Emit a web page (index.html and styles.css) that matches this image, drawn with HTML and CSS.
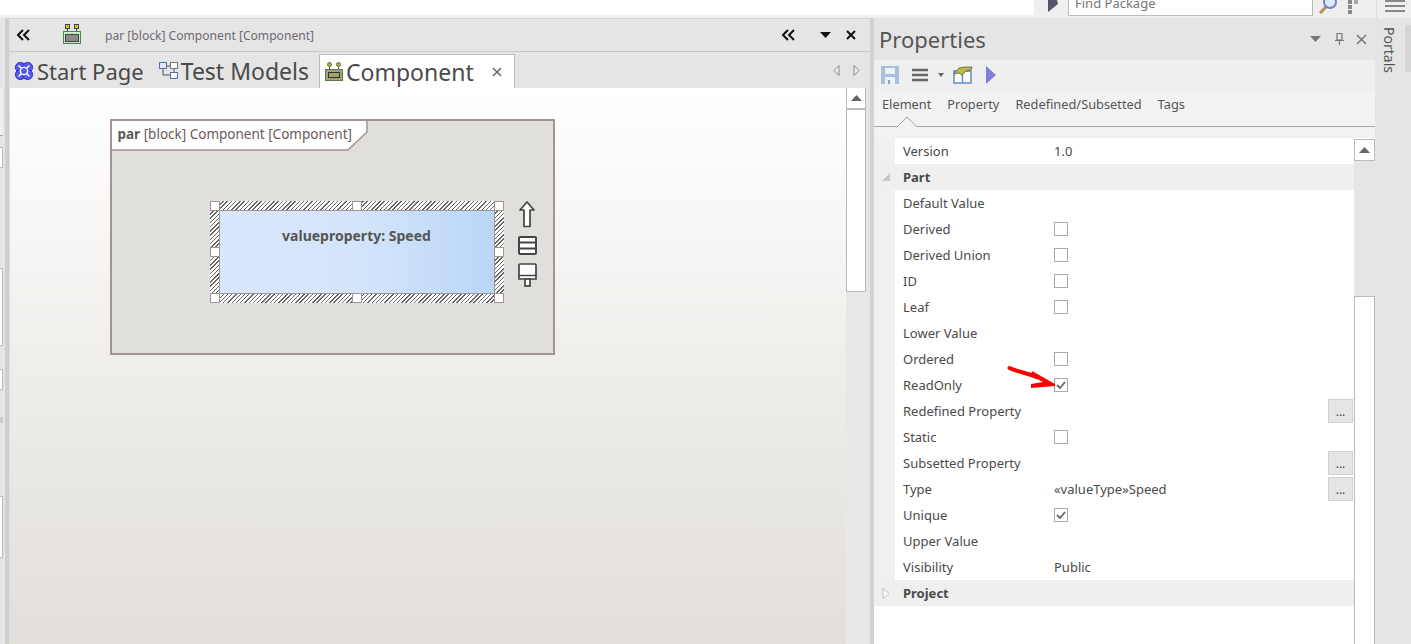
FILE: index.html
```html
<!DOCTYPE html>
<html lang="en">
<head>
    <meta charset="UTF-8">
    <title>Component - Properties</title>
    <link rel="stylesheet" href="styles.css">
</head>
<body>
    <div class="topbar">
        <div class="find-group">
            <svg class="find-play" width="12" height="14" viewBox="0 0 12 14"><path d="M1 0H10L11 4 1 12z" fill="#55566e"/></svg>
            <div class="find-box"><span>Find Package</span></div>
            <svg class="find-glass" width="22" height="14" viewBox="0 0 22 14"><path d="M2 13 8 7" stroke="#b58f55" stroke-width="3"/><circle cx="12" cy="2" r="6" fill="#dfeaf8" stroke="#6c86c4" stroke-width="2"/></svg>
            <div class="find-dots"><i></i><i></i><i></i><i></i></div>
            <div class="find-menu"><i></i><i></i><i></i></div>
        </div>
    </div>

    <div class="main">
        <div class="left-strip">
            <div class="strip-top"></div>
            <div class="strip-box strip-a"></div>
            <div class="strip-box strip-b"></div>
            <div class="strip-box strip-c"></div>
            <div class="strip-mark"></div>
            <div class="strip-box strip-d"></div>
        </div>

        <div class="diagram-panel">
            <div class="panel-head">
                <svg class="icon-chev" width="14" height="12" viewBox="0 0 14 12"><path d="M6 1 1 6l5 5M12 1 7 6l5 5" fill="none" stroke="#111" stroke-width="2"/></svg>
                <svg class="head-icon" width="18" height="20" viewBox="0 0 18 20"><rect x="2.500" y="0.500" width="4" height="4" fill="#c8c820" stroke="#444"/><rect x="11.500" y="0.500" width="4" height="4" fill="#c8c820" stroke="#444"/><path d="M4.500 5v3M13.500 5v3" stroke="#444"/><rect x="0.500" y="7.500" width="17" height="12" fill="#c4ecc4" stroke="#4a8a4a"/><rect x="2.500" y="10.500" width="13" height="7" fill="#8a8a8a" stroke="#444"/></svg>
                <span class="head-title">par [block] Component [Component]</span>
                <svg class="icon-chev head-right" width="14" height="12" viewBox="0 0 14 12"><path d="M6 1 1 6l5 5M12 1 7 6l5 5" fill="none" stroke="#111" stroke-width="2"/></svg>
                <svg class="head-drop" width="11" height="6" viewBox="0 0 11 6"><path d="M0 0h11L5.500 6z" fill="#111"/></svg>
                <svg class="head-close" width="10" height="10" viewBox="0 0 10 10"><path d="M1 1l8 8M9 1 1 9" stroke="#111" stroke-width="2"/></svg>
            </div>

            <div class="tabs">
                <div class="tab tab-start">
                    <svg width="20" height="20" viewBox="0 0 22 22"><circle cx="7" cy="7" r="5.500" fill="#5a5ae8" stroke="#2c2cc0"/><circle cx="15" cy="7" r="5.500" fill="#5a5ae8" stroke="#2c2cc0"/><circle cx="7" cy="15" r="5.500" fill="#5a5ae8" stroke="#2c2cc0"/><circle cx="15" cy="15" r="5.500" fill="#5a5ae8" stroke="#2c2cc0"/><circle cx="11" cy="11" r="4" fill="#5a5ae8" stroke="#fff" stroke-width="1.500"/><path d="M5 5 8 8M17 5 14 8M5 17 8 14M17 17 14 14" stroke="#fff" stroke-width="1.500"/></svg>
                    <span>Start Page</span>
                </div>
                <div class="tab tab-models">
                    <svg width="19" height="18" viewBox="0 0 19 18"><rect x="0.500" y="0.500" width="7" height="6" fill="#dfe6f5" stroke="#5570a8"/><rect x="11.500" y="0.500" width="7" height="6" fill="#fff" stroke="#777"/><rect x="11.500" y="10.500" width="7" height="6" fill="#fff" stroke="#5570a8"/><path d="M4 7v6h7M8 4h3M15 7v3" fill="none" stroke="#555"/></svg>
                    <span>Test Models</span>
                </div>
                <div class="tab tab-active">
                    <svg width="18" height="19" viewBox="0 0 18 19"><circle cx="4.500" cy="2.500" r="2" fill="#b5b52a" stroke="#666"/><circle cx="13.500" cy="2.500" r="2" fill="#b5b52a" stroke="#666"/><path d="M4.500 5v3M13.500 5v3" stroke="#555"/><rect x="0.500" y="7.500" width="17" height="11" fill="#a3a56e" stroke="#5c7a4a"/><rect x="3.500" y="10.500" width="11" height="5" fill="none" stroke="#333"/></svg>
                    <span>Component</span>
                    <svg class="tab-close" width="10" height="10" viewBox="0 0 10 10"><path d="M1 1l8 8M9 1 1 9" stroke="#666" stroke-width="1.500"/></svg>
                </div>
                <div class="tab-arrows">
                    <svg width="7" height="11" viewBox="0 0 7 11"><path d="M6 .5v10L1 5.500z" fill="#eee" stroke="#888"/></svg>
                    <svg width="7" height="11" viewBox="0 0 7 11"><path d="M1 .5v10l5-5z" fill="#eee" stroke="#888"/></svg>
                </div>
            </div>

            <div class="panel-body">
                <div class="canvas">
                    <div class="frame">
                        <div class="frame-label">
                            <svg class="frame-notch" width="258" height="32" viewBox="0 0 258 32"><path d="M0 0H255V11L236 29H0z" fill="#fff"/><path d="M255 0V11L236 29H0" fill="none" stroke="#a29494" stroke-width="1.500"/></svg>
                            <b>par</b> [block] Component [Component]
                        </div>
                        <div class="selection">
                            <div class="block">valueproperty: Speed</div>
                            <i class="handle h-tl"></i><i class="handle h-tc"></i><i class="handle h-tr"></i>
                            <i class="handle h-ml"></i><i class="handle h-mr"></i>
                            <i class="handle h-bl"></i><i class="handle h-bc"></i><i class="handle h-br"></i>
                        </div>
                        <div class="quick-tools">
                            <svg width="16" height="27" viewBox="0 0 16 27"><path d="M8 1 15 9H11V25.500H5V9H1z" fill="#fff" stroke="#444" stroke-width="1.700" stroke-linejoin="round"/></svg>
                            <svg width="19" height="19" viewBox="0 0 19 19"><rect x="1" y="1" width="17" height="17" rx="1" fill="#fff" stroke="#444" stroke-width="2"/><path d="M1 6.500h17M1 12.500h17" stroke="#444" stroke-width="2"/></svg>
                            <svg width="19" height="24" viewBox="0 0 19 24"><path d="M1 2a1 1 0 0 1 1-1H17a1 1 0 0 1 1 1V16H1z" fill="#fff" stroke="#444" stroke-width="1.700"/><path d="M1 12.500h17" stroke="#444" stroke-width="1.500"/><rect x="7" y="16" width="5" height="7" fill="#fff" stroke="#444" stroke-width="1.700"/></svg>
                        </div>
                    </div>
                </div>
                <div class="vscroll">
                    <div class="scroll-btn"><svg width="11" height="6" viewBox="0 0 11 6"><path d="M5.500 0 11 6H0z" fill="#666"/></svg></div>
                    <div class="scroll-thumb"></div>
                </div>
            </div>
        </div>

        <div class="splitter"></div>

        <div class="props-panel">
            <div class="props-title">
                <span class="props-name">Properties</span>
                <svg class="title-drop" width="11" height="6" viewBox="0 0 11 6"><path d="M0 0h11L5.500 6z" fill="#777"/></svg>
                <svg class="title-pin" width="9" height="12" viewBox="0 0 9 12"><path d="M2 .5h5V7H2zM0 7.500h9M4.500 8v4" fill="none" stroke="#777" stroke-width="1.200"/></svg>
                <svg class="title-close" width="11" height="11" viewBox="0 0 11 11"><path d="M1 1l9 9M10 1 1 10" stroke="#777" stroke-width="1.500"/></svg>
            </div>
            <div class="props-tools">
                <svg width="18" height="18" viewBox="0 0 18 18"><path d="M0 0H18V18H0z" fill="#a8c0dc"/><rect x="4" y="2" width="10" height="6" fill="#eef2f7"/><rect x="4" y="11" width="10" height="7" fill="#eef2f7"/><rect x="7" y="14" width="2" height="4" fill="#8aa4c4"/></svg>
                <svg class="tool-menu" width="16" height="14" viewBox="0 0 16 14"><path d="M0 2h16M0 7h16M0 12h16" stroke="#666" stroke-width="2.500"/></svg>
                <svg class="tool-drop" width="6" height="4" viewBox="0 0 6 4"><path d="M0 0h6L3 4z" fill="#666"/></svg>
                <svg class="tool-book" width="20" height="18" viewBox="0 0 20 18"><rect x="1" y="5" width="17" height="12" fill="#fff" stroke="#5f8fc0" stroke-width="1.500"/><path d="M9.500 5v12" stroke="#5f8fc0" stroke-width="1.500"/><path d="M1 8 6 2 12 1 19 1 18 4 13 5 11 7 9 9 6 7z" fill="#c4bb3a" stroke="#555" stroke-width=".8"/></svg>
                <svg class="tool-play" width="10" height="18" viewBox="0 0 10 18"><path d="M0 0 10 9 0 18z" fill="#7d7de0"/></svg>
            </div>
            <div class="props-tabs">
                <span>Element</span><span>Property</span><span>Redefined/Subsetted</span><span>Tags</span>
                <svg class="tab-notch" width="20" height="11" viewBox="0 0 20 11"><path d="M0 11 10 1 20 11" fill="#f2f2f2" stroke="#aaa"/><path d="M1 11h18" stroke="#f2f2f2" stroke-width="2"/></svg>
            </div>

            <div class="props-body">
                <div class="prop-list">
                    <div class="row"><span class="name">Version</span><span class="value">1.0</span></div>
                    <div class="row-group"><svg width="8" height="8" viewBox="0 0 8 8"><path d="M8 0V8H0z" fill="#c6c6c6"/></svg><b>Part</b></div>
                    <div class="row"><span class="name">Default Value</span></div>
                    <div class="row"><span class="name">Derived</span><span class="check"></span></div>
                    <div class="row"><span class="name">Derived Union</span><span class="check"></span></div>
                    <div class="row"><span class="name">ID</span><span class="check"></span></div>
                    <div class="row"><span class="name">Leaf</span><span class="check"></span></div>
                    <div class="row"><span class="name">Lower Value</span></div>
                    <div class="row"><span class="name">Ordered</span><span class="check"></span></div>
                    <div class="row"><span class="name">ReadOnly</span><span class="check"><svg width="10" height="8" viewBox="0 0 10 8"><path d="M1 4l3 3 5-6" fill="none" stroke="#666" stroke-width="1.800"/></svg></span></div>
                    <div class="row"><span class="name">Redefined Property</span><span class="more">...</span></div>
                    <div class="row"><span class="name">Static</span><span class="check"></span></div>
                    <div class="row"><span class="name">Subsetted Property</span><span class="more">...</span></div>
                    <div class="row"><span class="name">Type</span><span class="value">«valueType»Speed</span><span class="more">...</span></div>
                    <div class="row"><span class="name">Unique</span><span class="check"><svg width="10" height="8" viewBox="0 0 10 8"><path d="M1 4l3 3 5-6" fill="none" stroke="#666" stroke-width="1.800"/></svg></span></div>
                    <div class="row"><span class="name">Upper Value</span></div>
                    <div class="row"><span class="name">Visibility</span><span class="value">Public</span></div>
                    <div class="row-group"><svg width="8" height="11" viewBox="0 0 8 11"><path d="M1 .5v10l6-5z" fill="#fff" stroke="#bbb"/></svg><b>Project</b></div>
                </div>
                <div class="list-scroll">
                    <div class="scroll-btn"><svg width="11" height="6" viewBox="0 0 11 6"><path d="M5.500 0 11 6H0z" fill="#666"/></svg></div>
                    <div class="list-thumb"></div>
                </div>
            </div>
        </div>

        <div class="portals">
            <span>Portals</span>
            <div class="portals-thumb"></div>
        </div>
    </div>

    <!-- annotation drawn on top of the screenshot -->
    <svg class="red-arrow" width="52" height="26" viewBox="0 0 52 26">
        <path d="M2.500 3C8 6 16 7 30 12" fill="none" stroke="#f00" stroke-width="4" stroke-linecap="round"/>
        <path d="M25 6 48 19V21L24 23V19L36 17 24 11z" fill="#f00"/>
    </svg>
</body>
</html>
```

FILE: styles.css
```css
* {
    box-sizing: border-box;
}

html, body {
    margin: 0;
    height: 644px;
    overflow: hidden;
}

body {
    position: relative;
    font-family: "Noto Sans", "Open Sans", sans-serif;
    font-size: 13px;
    color: #4a4a4a;
    background-color: #e5e5e5;
}

svg {
    display: block;
    flex: none;
}

/* top strip */
.topbar {
    display: flex;
    justify-content: flex-end;
    height: 18px;
    background-color: #fff;
    border-bottom: 3px solid #efefef;
}

.find-group {
    display: flex;
    flex: none;
    width: 377px;
    height: 18px;
    padding-left: 13px;
    background-color: #efefef;
    overflow: hidden;
}

.find-box {
    flex: none;
    width: 245px;
    height: 16px;
    margin-left: 9px;
    padding-left: 6px;
    background-color: #fff;
    border: 1px solid #bbb;
    border-top: none;
    color: #777;
    line-height: 6px;
}

.find-glass {
    margin-left: 5px;
}

.find-dots {
    display: grid;
    grid-template-columns: 4px 4px;
    grid-auto-rows: 4px;
    gap: 1px 2px;
    flex: none;
    margin-left: 8px;
}

.find-dots i {
    grid-column: 1;
    background-color: #888;
}

.find-dots i:nth-child(2) {
    grid-column: 2;
    grid-row: 1;
    background-color: #aaa;
}

.find-menu {
    flex: none;
    width: 35px;
    margin-left: 18px;
    padding-left: 8px;
    border-left: 1px solid #ddd;
}

.find-menu i {
    display: block;
    width: 20px;
    height: 2px;
    margin-bottom: 3px;
    background-color: #888;
}

.main {
    display: flex;
    height: 626px;
}

/* docked windows on the far left, mostly cut off */
.left-strip {
    flex: none;
    width: 10px;
    background-image: linear-gradient(to right, #e5e5e5 5px, #cfcfcf 5px, #cfcfcf 9px, #ddd 9px);
}

.strip-top {
    width: 3px;
    height: 118px;
    background-image: linear-gradient(to bottom, #e5e5e5 70px, #efefef 70px);
    border-bottom: 1px solid #aaa;
}

.strip-box {
    width: 3px;
    background-color: #fff;
    border: 1px solid #bbb;
    border-left: none;
}

.strip-a {
    height: 21px;
    margin-top: 11px;
}

.strip-b {
    height: 78px;
    margin-top: 100px;
}

.strip-c {
    height: 21px;
    margin-top: 23px;
}

.strip-mark {
    width: 3px;
    height: 6px;
    margin-top: 27px;
    background-color: #ccc;
}

.strip-d {
    height: 62px;
    margin-top: 73px;
}

/* diagram window */
.diagram-panel {
    display: flex;
    flex-direction: column;
    flex: none;
    width: 860px;
    background-color: #e5e5e5;
}

.panel-head {
    display: flex;
    flex: none;
    align-items: center;
    height: 34px;
    padding-left: 7px;
    border-top: 1px solid #d2d2d2;
    border-bottom: 1px solid #c8c8c8;
}

.head-icon {
    margin-left: 32px;
    margin-bottom: 3px;
}

.head-title {
    margin-left: 24px;
    font-size: 12.100px;
    color: #6e6a72;
}

.head-right {
    margin-left: auto;
}

.head-drop {
    margin-left: 24px;
}

.head-close {
    margin-left: 15px;
    margin-right: 14px;
}

.tabs {
    display: flex;
    flex: none;
    align-items: flex-end;
    height: 36px;
    padding-left: 4px;
}

.tab {
    display: flex;
    align-items: center;
    gap: 3px;
    height: 34px;
    font-size: 23px;
    color: #4a4a4a;
}

.tab span {
    line-height: 34px;
}

.tab-start {
    font-size: 22px;
}

.tab-models {
    margin-left: 15px;
}

.tab-active {
    width: 196px;
    margin-left: 10px;
    padding-left: 5px;
    background-color: #fff;
    border: 1px solid #bbb;
    border-bottom: none;
}

.tab-close {
    margin-left: 15px;
}

.tab-arrows {
    display: flex;
    gap: 13px;
    align-self: center;
    margin-left: auto;
    margin-right: 10px;
}

.panel-body {
    display: flex;
    flex: 1;
    min-height: 0;
    padding-right: 4px;
}

.canvas {
    position: relative;
    flex: 1;
    background-image: linear-gradient(to bottom, #fff, #f4f3f1 35%, #e8e6e3 75%, #e2dfdb);
}

.vscroll {
    width: 20px;
    background-color: #e9e8e6;
}

.scroll-btn {
    display: flex;
    align-items: center;
    justify-content: center;
    width: 21px;
    height: 22px;
    background-color: #fff;
    border: 1px solid #bbb;
}

.vscroll .scroll-btn {
    width: 20px;
    height: 21px;
    border-top: none;
}

.scroll-thumb {
    height: 183px;
    background-color: #fff;
    border: 1px solid #bbb;
}

/* diagram canvas items */
.frame {
    position: absolute;
    z-index: 0;
    left: 99.500px;
    top: 30.500px;
    width: 445px;
    height: 236px;
    background-color: #e0dfdb;
    border: 2.500px solid #a29494;
}

.frame-label {
    position: relative;
    width: 256px;
    height: 29px;
    padding-left: 6px;
    font-size: 13.500px;
    line-height: 27px;
    color: #6a5a5a;
}

.frame-label b {
    color: #5a5a5a;
}

.frame-notch {
    position: absolute;
    left: 0;
    top: 0;
    z-index: -1;
}

.selection {
    position: absolute;
    left: 98px;
    top: 80px;
    width: 294px;
    height: 102px;
    padding: 9px;
    background-image: repeating-linear-gradient(135deg, #666 0, #666 1px, #fff 1px, #fff 3px);
}

.block {
    height: 84px;
    padding-top: 15px;
    background-image: linear-gradient(to right, #d8e7fb, #d4e5fa 50%, #b9d6f8);
    border: 1px solid #a29494;
    font-weight: 700;
    font-size: 14px;
    text-align: center;
    color: #555;
}

.handle {
    position: absolute;
    width: 10px;
    height: 10px;
    background-color: #fff;
    border: 1px solid #a29494;
}

.h-tl { left: 0; top: 0; }
.h-tc { left: 142px; top: 0; }
.h-tr { right: 0; top: 0; }
.h-ml { left: 0; top: 46px; }
.h-mr { right: 0; top: 46px; }
.h-bl { left: 0; bottom: 0; }
.h-bc { left: 142px; bottom: 0; }
.h-br { right: 0; bottom: 0; }

.quick-tools {
    position: absolute;
    left: 406px;
    top: 80px;
    display: flex;
    flex-direction: column;
    align-items: center;
    gap: 8px;
}

.splitter {
    flex: none;
    width: 4px;
    background-color: #d2d2d2;
}

/* properties window */
.props-panel {
    display: flex;
    flex-direction: column;
    flex: none;
    width: 501px;
}

.props-title {
    display: flex;
    flex: none;
    align-items: center;
    height: 42px;
    padding-left: 5px;
}

.props-name {
    font-size: 22px;
    color: #555;
}

.title-drop {
    margin-left: auto;
}

.title-pin {
    margin-left: 14px;
}

.title-close {
    margin-left: 12px;
    margin-right: 8px;
}

.props-tools {
    display: flex;
    flex: none;
    align-items: center;
    height: 30px;
    padding-left: 7px;
    background-color: #efefef;
}

.tool-menu {
    margin-left: 13px;
}

.tool-drop {
    margin-left: 10px;
}

.tool-book {
    margin-left: 9px;
}

.tool-play {
    margin-left: 13px;
}

.props-tabs {
    position: relative;
    display: flex;
    flex: none;
    gap: 16px;
    height: 37px;
    padding: 5px 0 0 8px;
    background-color: #f2f2f2;
    border-bottom: 1px solid #aaa;
    font-size: 12.800px;
    color: #555;
}

.tab-notch {
    position: absolute;
    left: 23px;
    bottom: -1px;
}

.props-body {
    position: relative;
    flex: 1;
    min-height: 0;
    display: flex;
    padding-top: 11px;
    background-image: linear-gradient(to bottom, #f2f2f2 11px, #fff 11px);
}

.prop-list {
    flex: 1;
}

.row {
    display: flex;
    align-items: center;
    height: 26px;
    padding-left: 29px;
    background-image: linear-gradient(to right, #f0f0f0 21px, #fff 21px);
}

.row-group {
    display: flex;
    align-items: center;
    gap: 13px;
    height: 26px;
    padding-left: 8px;
    background-color: #efefef;
}

.row-group b {
    font-weight: 700;
}

.name {
    width: 151px;
    flex: none;
}

.value {
    flex: 1;
}

.check {
    display: flex;
    align-items: center;
    justify-content: center;
    width: 14px;
    height: 14px;
    background-color: #fff;
    border: 1px solid #aaa;
}

.more {
    width: 25px;
    height: 24px;
    margin-left: auto;
    margin-right: 1px;
    background-color: #e5e5e5;
    border: 1px solid #d0d0d0;
    text-align: center;
    line-height: 24px;
    font-size: 12px;
    color: #444;
}

.list-scroll {
    display: flex;
    flex-direction: column;
    flex: none;
    width: 21px;
    margin-top: 1px;
    background-color: #e5e5e5;
}

.list-thumb {
    flex: 1;
    margin-top: 135px;
    background-color: #fff;
    border: 1px solid #bbb;
    border-bottom: none;
}

/* collapsed portals tab */
.portals {
    position: relative;
    flex: 1;
    padding: 9px 0 0 4px;
    border-left: 1px solid #e5e5e5;
}

.portals span {
    writing-mode: vertical-rl;
    font-size: 14px;
    color: #555;
}

.portals-thumb {
    position: absolute;
    right: 0;
    top: 7px;
    width: 6px;
    height: 47px;
    background-color: #d6d6d6;
}

.red-arrow {
    position: absolute;
    left: 1007px;
    top: 365px;
}
```
